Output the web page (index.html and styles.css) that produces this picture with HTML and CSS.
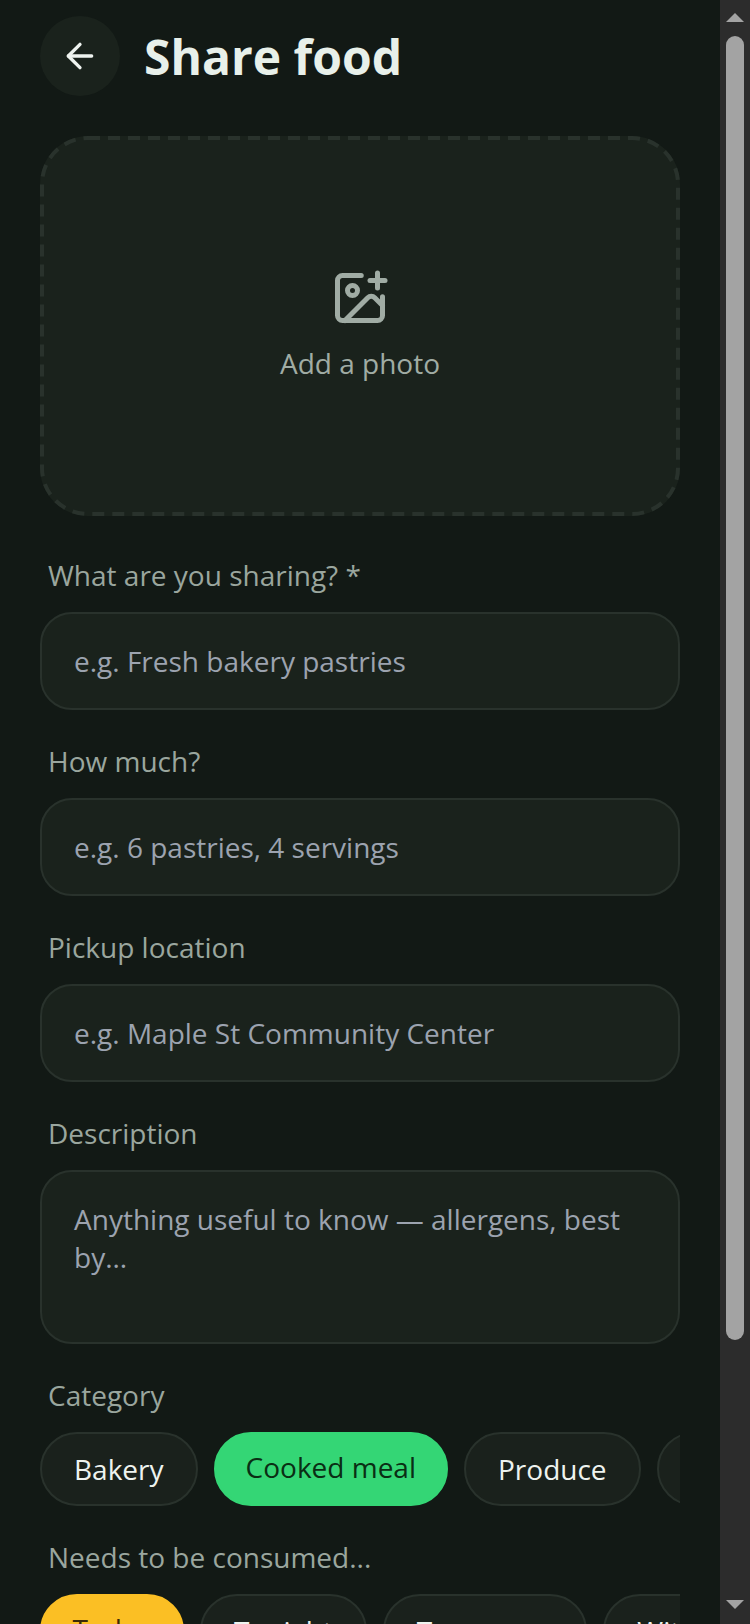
FILE: index.html
```html
<!DOCTYPE html>
<html lang="en">
<head>
  <meta charset="UTF-8" />
  <meta name="viewport" content="width=device-width, initial-scale=1.0"/>
  <title>Share food</title>
  <link rel="stylesheet" href="styles.css">
</head>
<body>
  <main class="page">
    <header class="top">
      <button class="back" type="button" aria-label="Back">
        <svg viewBox="0 0 24 24" width="40" height="40" fill="none" stroke="currentColor" stroke-width="2" stroke-linecap="round" stroke-linejoin="round"><path d="M19 12H5"/><path d="M12 19l-7-7 7-7"/></svg>
      </button>
      <h1>Share food</h1>
    </header>

    <form class="form">
      <button class="photo" type="button">
        <svg class="dashes" width="640" height="380"><rect x="2" y="2" width="636" height="376" rx="46" ry="46"/></svg>
        <svg viewBox="0 0 24 24" width="60" height="60" fill="none" stroke="currentColor" stroke-width="2" stroke-linecap="round" stroke-linejoin="round"><path d="M16 5h6"/><path d="M19 2v6"/><path d="M21 11.5V19a2 2 0 0 1-2 2H5a2 2 0 0 1-2-2V5a2 2 0 0 1 2-2h7.5"/><path d="M21 15l-3.1-3.1a2 2 0 0 0-2.8 0L6 21"/><circle cx="9" cy="9" r="2"/></svg>
        <span>Add a photo</span>
      </button>

      <label class="label" for="what">What are you sharing? *</label>
      <input class="field" id="what" placeholder="e.g. Fresh bakery pastries">

      <label class="label" for="much">How much?</label>
      <input class="field" id="much" placeholder="e.g. 6 pastries, 4 servings">

      <label class="label" for="where">Pickup location</label>
      <input class="field" id="where" placeholder="e.g. Maple St Community Center">

      <label class="label" for="desc">Description</label>
      <textarea class="field area" id="desc" placeholder="Anything useful to know — allergens, best by..."></textarea>

      <div class="label">Category</div>
      <div class="chips">
        <button class="chip" type="button">Bakery</button>
        <button class="chip green" type="button">Cooked meal</button>
        <button class="chip" type="button">Produce</button>
        <button class="chip" type="button">Pantry</button>
      </div>

      <div class="label">Needs to be consumed...</div>
      <div class="chips">
        <button class="chip amber" type="button">Today</button>
        <button class="chip" type="button">Tonight</button>
        <button class="chip" type="button">Tomorrow</button>
        <button class="chip" type="button">Within a week</button>
      </div>
    </form>
  </main>

  <!-- page scrollbar -->
  <div class="scrollbar">
    <svg width="18" height="9"><path d="M9 0l9 9H0z"/></svg>
    <div class="thumb"></div>
    <svg class="down" width="18" height="9"><path d="M9 9L0 0h18z"/></svg>
  </div>
</body>
</html>
```

FILE: styles.css
```css
* {
  box-sizing: border-box;
}
html {
  background-color: #121915;
  overflow: hidden;
}
body {
  margin: 0;
  height: 1624px;
  display: flex;
  overflow: hidden;
  font-family: "Open Sans", sans-serif;
  color: #eef3ef;
}
.page {
  width: 720px;
  flex: none;
  padding: 16px 40px 0;
}

.scrollbar {
  width: 30px;
  flex: none;
  display: flex;
  flex-direction: column;
  align-items: center;
  padding: 13px 0 15px;
  background-color: #2c2c2c;
}
.scrollbar svg {
  flex: none;
  fill: #a3a3a3;
}
.thumb {
  width: 18px;
  height: 1304px;
  margin-top: 14px;
  border-radius: 9px;
  background-color: #a3a3a3;
}
.down {
  margin-top: auto;
}

.top {
  display: flex;
  align-items: center;
  gap: 24px;
  margin-bottom: 40px;
}
.back {
  width: 80px;
  height: 80px;
  border: 0;
  border-radius: 50%;
  background-color: #1a221c;
  color: #eef3ef;
  display: flex;
  align-items: center;
  justify-content: center;
  padding: 0;
}
h1 {
  margin: 0;
  font-size: 48px;
  font-weight: 700;
  color: #e8f0ea;
}

.photo {
  position: relative;
  width: 100%;
  height: 380px;
  display: flex;
  flex-direction: column;
  align-items: center;
  justify-content: center;
  gap: 14px;
  border: 0;
  border-radius: 48px;
  background-color: #1a221c;
  color: #a0aca4;
  font-family: inherit;
  font-size: 28px;
  line-height: 42px;
  margin-bottom: 38px;
}
.dashes {
  position: absolute;
  top: 0;
  left: 0;
  fill: none;
  stroke: #29322c;
  stroke-width: 4;
  stroke-dasharray: 12 8;
}

.label {
  display: block;
  padding: 0 8px;
  margin-bottom: 16px;
  font-size: 28px;
  line-height: 42px;
  color: #9aa69e;
}
.field {
  display: block;
  width: 100%;
  height: 98px;
  margin-bottom: 30px;
  padding: 0 32px;
  border: 2px solid #29322c;
  border-radius: 32px;
  background-color: #1a221c;
  color: #eef3ef;
  font-family: inherit;
  font-size: 28px;
  outline: none;
}
.field::placeholder {
  color: #9ca3af;
  opacity: 1;
}
.area {
  height: 174px;
  padding: 28px 32px;
  line-height: 38px;
  resize: none;
}

.chips {
  display: flex;
  gap: 16px;
  overflow: hidden;
  margin-bottom: 30px;
}
.chip {
  flex: none;
  height: 74px;
  padding: 0 32px;
  border: 2px solid #29322c;
  border-radius: 37px;
  background-color: #1a211c;
  color: #eef3ef;
  font-family: inherit;
  font-size: 28px;
}
.green {
  padding: 0 30px 4px;
  background-color: #34d675;
  border-color: #34d675;
  color: #0a2e14;
}
.amber {
  padding: 0 30.5px 4px;
  background-color: #fbbf24;
  border-color: #fbbf24;
  color: #3b2a06;
}
```
